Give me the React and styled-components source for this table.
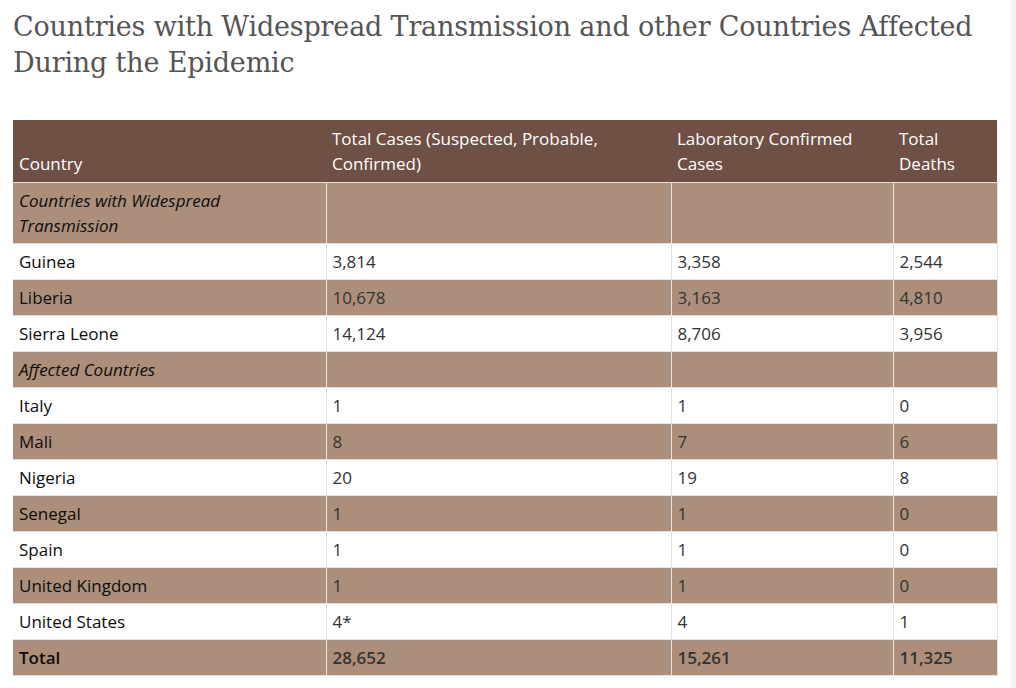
import styled, { createGlobalStyle } from "styled-components";

const GlobalStyle = createGlobalStyle`
  html, body {
    margin: 0;
    padding: 0;
    background: #fff;
  }
`;

const Page = styled.div`
  display: flex;
  width: 1016px;
  min-height: 688px;
`;

const Main = styled.main`
  flex: 1;
  min-width: 0;
  padding: 9px 14px 0 13px;
`;

const SideEdge = styled.div`
  width: 5px;
  flex: none;
  background: #f3f3f3;
`;

const Title = styled.h2`
  margin: 0 0 39px;
  font-family: "DejaVu Serif", "Liberation Serif", serif;
  font-weight: 400;
  font-size: 27px;
  line-height: 36px;
  color: #555;
  letter-spacing: -0.18px;
`;

const Table = styled.table`
  width: 984px;
  table-layout: fixed;
  border-collapse: collapse;
  font-family: "Open Sans", "Liberation Sans", sans-serif;
  font-size: 17px;
  line-height: 25px;
`;

const Col = styled.col`
  width: ${(p) => p.$w}px;
`;

const HeadCell = styled.th`
  background: #6f5044;
  color: #fff;
  font-weight: 400;
  text-align: left;
  vertical-align: bottom;
  padding: 6px 6px 6px;
`;

const Row = styled.tr`
  background: ${(p) => (p.$shade ? "#ab8f7a" : "#fff")};
`;

const Cell = styled.td`
  border: 1px solid #e2e2e2;
  padding: 5px 6px 5px;
  height: 25px;
  vertical-align: top;
  white-space: nowrap;
  color: ${(p) => (p.$name ? "#0d0d0d" : "#333")};
  font-style: ${(p) => (p.$italic ? "italic" : "normal")};
  font-weight: ${(p) => (p.$bold ? 600 : 400)};
  &:first-child {
    border-left: none;
  }
`;

const rows = [
  { name: "Countries with Widespread Transmission", group: true },
  { name: "Guinea", v: ["3,814", "3,358", "2,544"] },
  { name: "Liberia", v: ["10,678", "3,163", "4,810"] },
  { name: "Sierra Leone", v: ["14,124", "8,706", "3,956"] },
  { name: "Affected Countries", group: true },
  { name: "Italy", v: ["1", "1", "0"] },
  { name: "Mali", v: ["8", "7", "6"] },
  { name: "Nigeria", v: ["20", "19", "8"] },
  { name: "Senegal", v: ["1", "1", "0"] },
  { name: "Spain", v: ["1", "1", "0"] },
  { name: "United Kingdom", v: ["1", "1", "0"] },
  { name: "United States", v: ["4*", "4", "1"] },
  { name: "Total", v: ["28,652", "15,261", "11,325"], total: true },
];

function shadeFor(i, row) {
  if (row.group || row.total) return true;
  return i % 2 === 0;
}

export default function App() {
  return (
    <>
      <GlobalStyle />
      <Page>
        <Main>
          <Title>
            Countries with Widespread Transmission and other Countries Affected
            During the Epidemic
          </Title>
          <Table>
            <colgroup>
              <Col $w={313} />
              <Col $w={345} />
              <Col $w={222} />
              <Col $w={104} />
            </colgroup>
            <thead>
              <tr>
                <HeadCell>Country</HeadCell>
                <HeadCell>
                  Total Cases (Suspected, Probable,
                  <br />
                  Confirmed)
                </HeadCell>
                <HeadCell>
                  Laboratory Confirmed
                  <br />
                  Cases
                </HeadCell>
                <HeadCell>
                  Total
                  <br />
                  Deaths
                </HeadCell>
              </tr>
            </thead>
            <tbody>
              {rows.map((row, i) => (
                <Row key={row.name} $shade={shadeFor(i, row)}>
                  {row.group ? (
                    <>
                      <Cell $name $italic>
                        {row.name === "Affected Countries" ? (
                          row.name
                        ) : (
                          <>
                            Countries with Widespread
                            <br />
                            Transmission
                          </>
                        )}
                      </Cell>
                      <Cell />
                      <Cell />
                      <Cell />
                    </>
                  ) : (
                    <>
                      <Cell $name $bold={row.total}>{row.name}</Cell>
                      {row.v.map((val, j) => (
                        <Cell key={j} $bold={row.total}>
                          {val}
                        </Cell>
                      ))}
                    </>
                  )}
                </Row>
              ))}
            </tbody>
          </Table>
        </Main>
        <SideEdge />
      </Page>
    </>
  );
}
